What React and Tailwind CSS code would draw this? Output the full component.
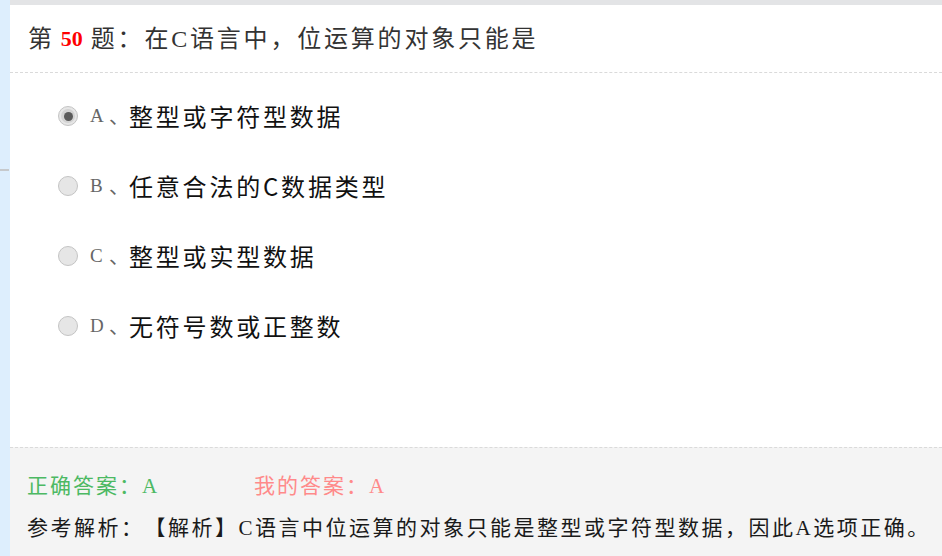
import React from 'react';

const options = [
    { key: 'A', text: '整型或字符型数据', checked: true },
    { key: 'B', text: '任意合法的C数据类型', checked: false },
    { key: 'C', text: '整型或实型数据', checked: false },
    { key: 'D', text: '无符号数或正整数', checked: false },
];

const serifCjk = { fontFamily: '"Liberation Serif", "Noto Sans CJK SC", serif' };
const sansCjk = { fontFamily: '"Noto Sans CJK SC", "Liberation Sans", sans-serif' };

const Radio = ({ checked }) => (
    <span className="flex h-[20px] w-[20px] items-center justify-center rounded-full border border-[#c4c4c4] bg-[#e6e6e6]">
        {checked && (
            <span className="flex h-[14px] w-[14px] items-center justify-center rounded-full bg-[#d2d2d2]">
                <span className="h-[9px] w-[9px] rounded-full bg-[#5a5a5a]" />
            </span>
        )}
    </span>
);

const App = () => {
    return (
        <div className="flex h-[556px] w-[942px] overflow-hidden bg-white [text-spacing-trim:space-all]">
            {/* left strip */}
            <div className="w-[10px] shrink-0 bg-[#ddeefd]">
                <div className="mt-[169px] h-[2px] w-[9px] bg-[#c6c9cc]" />
            </div>

            <div className="flex flex-1 flex-col">
                <div className="h-[5px] bg-[#e3e4e6]" />

                {/* question header */}
                <div
                    className="flex h-[68px] items-center border-b border-dashed border-[#dadada] pl-[18px] text-[24px] tracking-[2.8px] text-[#333]"
                    style={serifCjk}
                >
                    <span>第</span>
                    <span className="ml-[6px] mr-[8px] text-[22px] font-bold tracking-normal text-[#ff0000]">50</span>
                    <span>题：在C语言中，位运算的对象只能是</span>
                </div>

                {/* options */}
                <div className="flex h-[374px] flex-col pt-[8px]">
                    {options.map(opt => (
                        <div key={opt.key} className="flex h-[70px] items-center pl-[48px]">
                            <Radio checked={opt.checked} />
                            <span className="ml-[12px] w-[19px] text-[19px] text-[#666]" style={serifCjk}>
                                {opt.key}
                            </span>
                            <span className="w-[20px] text-[20px] text-[#666]" style={sansCjk}>、</span>
                            <span className="text-[24px] tracking-[2.8px] text-[#111]" style={sansCjk}>
                                {opt.text}
                            </span>
                        </div>
                    ))}
                </div>

                {/* answer / analysis */}
                <div className="flex flex-1 flex-col border-t border-dashed border-[#dadada] bg-[#f4f4f4] pl-[17px] pt-[24px] text-[21px]" style={serifCjk}>
                    <div className="flex h-[30px] items-center tracking-[2px]">
                        <span className="w-[227px] text-[#4cb963]">正确答案：A</span>
                        <span className="text-[#ff8a8a]">我的答案：A</span>
                    </div>
                    <div className="mt-[12px] flex h-[30px] items-center whitespace-nowrap tracking-[2.5px] text-[#1a1a1a]">
                        参考解析：【解析】C语言中位运算的对象只能是整型或字符型数据，因此A选项正确。
                    </div>
                </div>
            </div>
        </div>
    );
};

export default App;
